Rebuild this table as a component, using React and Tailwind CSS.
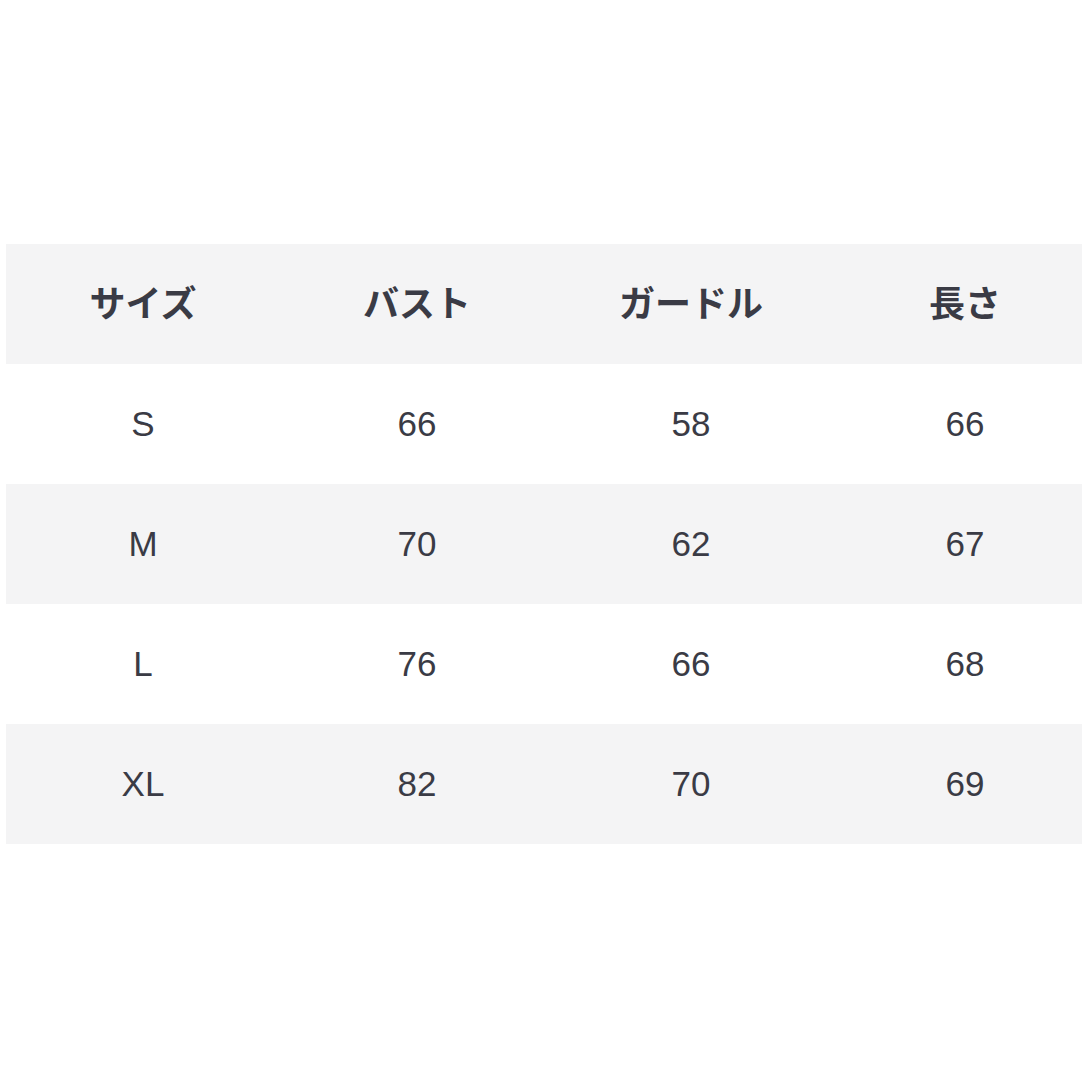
export default function App() {
  const header = ["サイズ", "バスト", "ガードル", "長さ"];
  const rows = [
    ["S", "66", "58", "66"],
    ["M", "70", "62", "67"],
    ["L", "76", "66", "68"],
    ["XL", "82", "70", "69"],
  ];
  return (
    <div className="w-[1082px] h-[1082px] bg-white overflow-hidden pt-[244px] pl-[6px]" style={{ fontFamily: '"Liberation Sans", "Noto Sans CJK JP", sans-serif' }}>
      <div className="w-[1096px] text-[#3a3b45]">
        <div className="grid grid-cols-4 h-[120px] bg-[#f4f4f5] items-center pb-[6px]">
          {header.map((h) => (
            <div key={h} className="text-center text-[36px] leading-none font-bold" style={{ fontFamily: '"Noto Sans CJK JP", sans-serif' }}>{h}</div>
          ))}
        </div>
        {rows.map((r, i) => (
          <div key={r[0]} className={`grid grid-cols-4 h-[120px] items-center ${i % 2 === 1 ? "bg-[#f4f4f5]" : "bg-white"}`}>
            {r.map((c, j) => (
              <div key={j} className="text-center text-[35px]">{c}</div>
            ))}
          </div>
        ))}
      </div>
    </div>
  );
}
